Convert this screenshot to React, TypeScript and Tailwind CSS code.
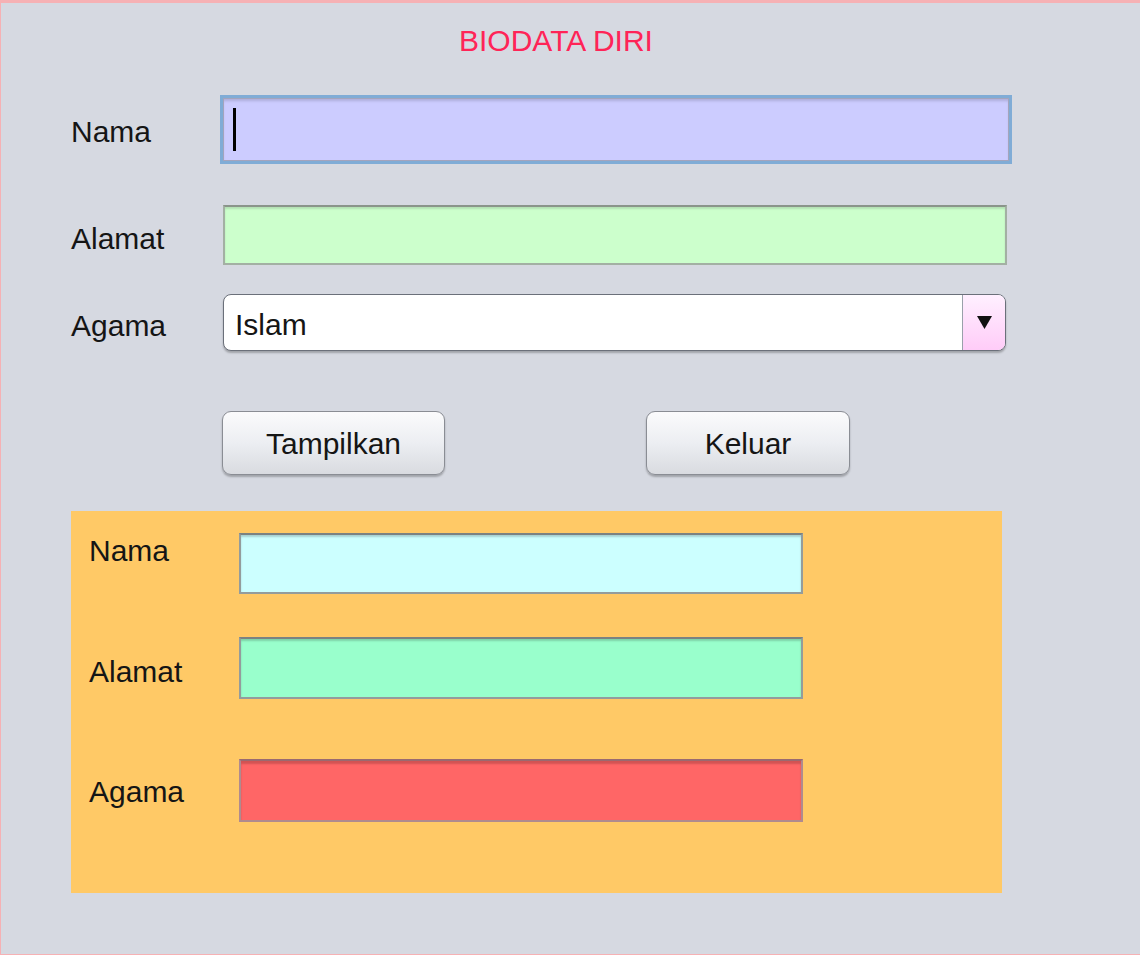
import React from "react";

const font = { fontFamily: '"Liberation Sans", Arial, sans-serif' };

function Label({ children, className = "" }: { children: React.ReactNode; className?: string }) {
  return (
    <div className={`shrink-0 text-[30px] leading-[30px] text-[#151515] ${className}`}>{children}</div>
  );
}

function OutField({ color, className = "" }: { color: string; className?: string }) {
  return (
    <div
      className={`w-[564px] border-2 border-[#949c9c] border-t-[#7b8282] shadow-[inset_0_2px_2px_rgba(0,0,0,0.18)] ${color} ${className}`}
    />
  );
}

export default function App() {
  return (
    <div
      style={font}
      className="box-border flex h-[955px] w-[1140px] flex-col border-t-[3px] border-b border-l border-[#f6b1b4] bg-[#d6d9e1]"
    >
      <div className="pt-[23px] pl-[458px] text-[30px] leading-[30px] text-[#ff2457]">BIODATA DIRI</div>

      <div className="flex flex-col pl-[70px]">
        {/* Nama */}
        <div className="mt-[39px] flex h-[69px] items-center">
          <Label className="mt-[4px] w-[149px]">Nama</Label>
          <div className="box-border flex h-[69px] w-[792px] items-center border-[3px] border-[#80acd6] bg-[#ccccff] shadow-[inset_0_0_0_1px_#a4a4bc,inset_0_3px_3px_rgba(0,0,0,0.15)]">
            <span className="ml-[10px] h-[43px] w-[3px] bg-black" />
          </div>
        </div>

        {/* Alamat */}
        <div className="mt-[41px] flex h-[60px] items-center">
          <Label className="mt-[7px] w-[152px]">Alamat</Label>
          <div className="box-border h-[60px] w-[784px] border-2 border-[#a3b0a3] border-t-[#8a948a] bg-[#ccffcc] shadow-[inset_0_2px_2px_rgba(0,0,0,0.12)]" />
        </div>

        {/* Agama */}
        <div className="mt-[29px] flex h-[57px] items-center">
          <Label className="mt-[6px] w-[152px]">Agama</Label>
          <div className="box-border flex h-[57px] w-[783px] items-stretch overflow-hidden rounded-[8px] border-[1.5px] border-[#6b707a] bg-white shadow-[0_2px_2px_rgba(0,0,0,0.25)]">
            <div className="flex flex-1 items-center pt-[5px] pl-[11px] text-[30px] leading-[30px] text-[#151515]">Islam</div>
            <div className="flex w-[43px] items-center justify-center border-l border-[#9aa0aa] bg-gradient-to-b from-[#fff0ff] to-[#ffccf8]">
              <svg width="15" height="13" viewBox="0 0 15 13">
                <polygon points="0,0 15,0 7.5,13" fill="#111" />
              </svg>
            </div>
          </div>
        </div>

        {/* Buttons */}
        <div className="mt-[60px] flex h-[64px] items-stretch pl-[151px]">
          <button className="box-border w-[223px] rounded-[9px] border-[1.5px] border-[#8a8d94] bg-gradient-to-b from-[#fbfbfc] via-[#eceef2] to-[#d9dbe0] pt-[2px] text-[30px] leading-[30px] text-[#151515] shadow-[0_2px_2px_rgba(0,0,0,0.25)]">
            Tampilkan
          </button>
          <button className="ml-[201px] box-border w-[204px] rounded-[9px] border-[1.5px] border-[#8a8d94] bg-gradient-to-b from-[#fbfbfc] via-[#eceef2] to-[#d9dbe0] pt-[2px] text-[30px] leading-[30px] text-[#151515] shadow-[0_2px_2px_rgba(0,0,0,0.25)]">
            Keluar
          </button>
        </div>

        {/* Output panel */}
        <div className="mt-[36px] box-border flex h-[382px] w-[931px] flex-col bg-[#ffc966] pt-[22px] pl-[18px]">
          <div className="flex h-[61px] items-start">
            <Label className="mt-[3px] w-[150px]">Nama</Label>
            <OutField color="bg-[#ccffff]" className="h-[61px]" />
          </div>
          <div className="mt-[43px] flex h-[62px] items-start">
            <Label className="mt-[20px] w-[150px]">Alamat</Label>
            <OutField color="bg-[#99ffcc]" className="h-[62px]" />
          </div>
          <div className="mt-[60px] flex h-[63px] items-start">
            <Label className="mt-[18px] w-[150px]">Agama</Label>
            <div className="h-[63px] w-[564px] border-2 border-[#b08a8e] border-t-[#9a6a70] bg-[#ff6666] shadow-[inset_0_3px_2px_rgba(0,0,0,0.18)]" />
          </div>
        </div>
      </div>
    </div>
  );
}
